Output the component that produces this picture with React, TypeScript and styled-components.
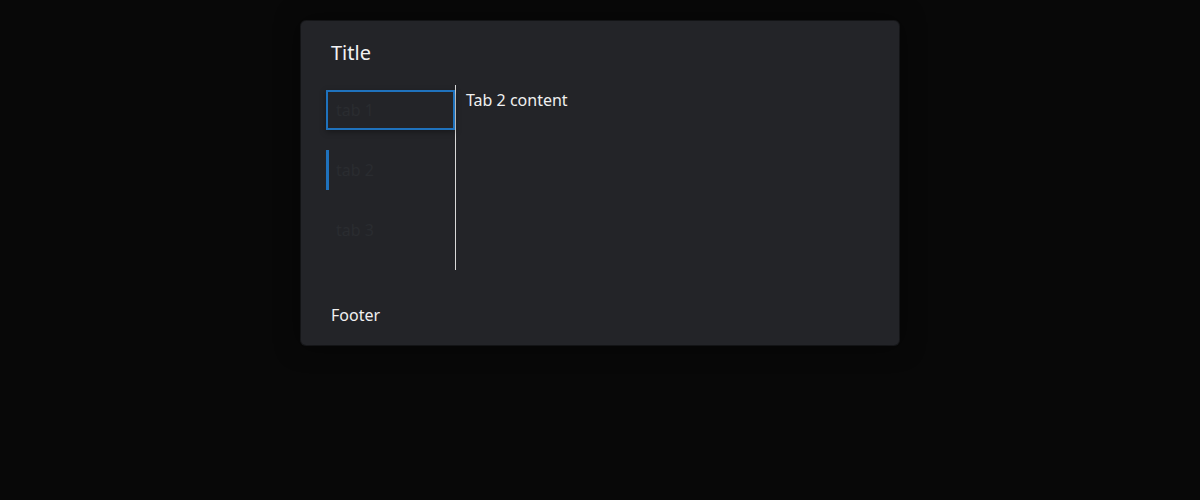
import React, { useState } from "react";
import styled, { createGlobalStyle } from "styled-components";

const Global = createGlobalStyle`
  html, body { margin: 0; padding: 0; background: #080808; }
  body { font-family: "Noto Sans", "Open Sans", sans-serif; color: #f0f0f0; }
  * { box-sizing: border-box; }
`;

const Page = styled.div`
  width: 1200px;
  height: 500px;
  padding-top: 21px;
  background: #080808;
`;

const Card = styled.div`
  width: 598px;
  margin: 0 auto;
  background: #232428;
  border-radius: 5px;
  box-shadow: 0 0 24px rgba(0, 0, 0, 0.55), 0 0 0 1px #1b1c1f;
  padding: 18px 30px 19px;
  display: flex;
  flex-direction: column;
`;

const Title = styled.h2`
  margin: 0 0 19px;
  font-size: 20px;
  line-height: 27px;
  font-weight: 400;
  color: #f2f2f2;
`;

const TabsRow = styled.div`
  display: flex;
  height: 185px;
  margin-left: -5px;
`;

const TabList = styled.div`
  width: 130px;
  flex: none;
  display: flex;
  flex-direction: column;
  gap: 20px;
  padding: 5px 0 20px;
  border-right: 1px solid #d8d8d8;
`;

const Tab = styled.button<{ $active?: boolean; $focused?: boolean }>`
  all: unset;
  display: block;
  height: 40px;
  line-height: 40px;
  padding-left: 10px;
  font-family: "Noto Sans", "Open Sans", sans-serif;
  font-size: 16px;
  color: #2a2c30;
  cursor: pointer;
  box-shadow: ${(p) =>
    p.$focused
      ? "inset 0 0 0 2px #1f72bd, 0 2px 6px rgba(0,0,0,0.35)"
      : p.$active
      ? "inset 3px 0 0 #1f72bd"
      : "none"};
`;

const Panel = styled.div`
  flex: 1;
  padding: 4px 10px;
  font-size: 16px;
  line-height: 22px;
  color: #f0f0f0;
`;

const Footer = styled.div`
  margin-top: 34px;
  font-size: 16px;
  line-height: 22px;
  color: #f0f0f0;
`;

export default function App() {
  const [active, setActive] = useState(1);
  const tabs = ["tab 1", "tab 2", "tab 3"];
  return (
    <>
      <Global />
      <Page>
        <Card>
          <Title>Title</Title>
          <TabsRow>
            <TabList>
              {tabs.map((t, i) => (
                <Tab
                  key={t}
                  $active={i === active}
                  $focused={i === 0}
                  onClick={() => setActive(i)}
                >
                  {t}
                </Tab>
              ))}
            </TabList>
            <Panel>Tab {active + 1} content</Panel>
          </TabsRow>
          <Footer>Footer</Footer>
        </Card>
      </Page>
    </>
  );
}
